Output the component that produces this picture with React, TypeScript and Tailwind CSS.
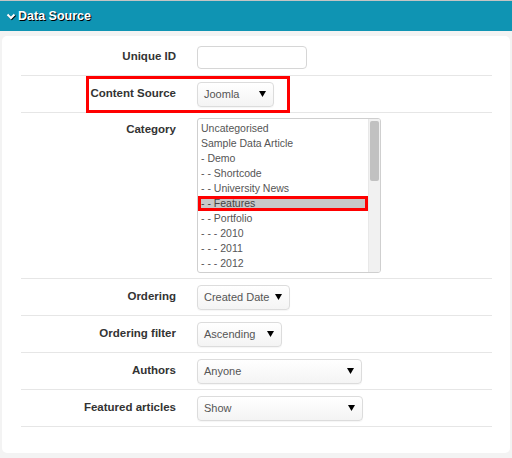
import React from "react";

const Tri = () => (
  <svg width="7" height="6" viewBox="0 0 7 6" className="shrink-0">
    <polygon points="0,0 7,0 3.5,6" fill="#000" />
  </svg>
);

const Select = ({ value, w }: { value: string; w: string }) => (
  <div
    className={`${w} h-[25px] flex items-center justify-between pl-[6px] pr-[7px] border border-[#dcdcdc] rounded-[4px] bg-linear-to-b from-white to-[#f4f4f4] shadow-[0_1px_1px_rgba(0,0,0,0.04)] text-[11px] text-[#555]`}
  >
    <span>{value}</span>
    <Tri />
  </div>
);

const Row = ({
  label,
  children,
  extra,
}: {
  label: string;
  children: React.ReactNode;
  extra?: React.ReactNode;
}) => (
  <div className="relative flex items-center h-[37px] border-b border-[#e6e6e6]">
    <div className="w-[155px] text-right text-[11.5px] font-bold text-[#333]">{label}</div>
    <div className="ml-[21px]">{children}</div>
    {extra}
  </div>
);

const options = [
  "Uncategorised",
  "Sample Data Article",
  "- Demo",
  "- - Shortcode",
  "- - University News",
  "- - Features",
  "- - Portfolio",
  "- - - 2010",
  "- - - 2011",
  "- - - 2012",
];

export default function App() {
  return (
    <div className="w-[512px] h-[458px] bg-[#f3f3f3] font-['Liberation_Sans',Arial,sans-serif] overflow-hidden">
      <div className="h-[31px] border-t border-[#c4c4c4] bg-[#0f94b3] flex items-center pl-[6px] text-white font-bold text-[12.5px] [text-shadow:1px_1px_0_#000]">
        <svg width="11" height="8" viewBox="0 0 11 8" className="mr-[1px] mt-[1px]">
          <polyline points="2.3,2.3 5.8,5.8 9.3,2.3" fill="none" stroke="#000" strokeWidth="2" />
          <polyline points="1.5,1.5 5,5 8.5,1.5" fill="none" stroke="#fff" strokeWidth="2" />
        </svg>
        <span>Data Source</span>
      </div>
      <div className="pt-[5px] px-[2px]">
        <div className="bg-white rounded-[5px] pt-[3px] pb-[26px] pl-[19px] pr-[18px]">
          <Row label="Unique ID">
            <div className="w-[110px] h-[23px] border border-[#d6d6d6] rounded-[4px] bg-white" />
          </Row>
          <Row
            label="Content Source"
            extra={
              <div className="absolute left-[65px] top-0 w-[204px] h-[37px] border-[3px] border-[#ff0000] pointer-events-none" />
            }
          >
            <Select value="Joomla" w="w-[77px]" />
          </Row>
          <div className="flex items-start py-[5px] border-b border-[#e6e6e6]">
            <div className="w-[155px] mt-[4px] leading-[15px] text-right text-[11.5px] font-bold text-[#333]">
              Category
            </div>
            <div className="ml-[21px] w-[184px] h-[155px] border border-[#cfcfcf] rounded-[3px] flex overflow-hidden bg-white">
              <div className="flex-1 pt-[2px]">
                {options.map((o) =>
                  o === "- - Features" ? (
                    <div
                      key={o}
                      className="leading-[15px] pl-[3px] text-[10.5px] text-[#444] bg-[#c8c8c8] shadow-[inset_0_0_0_3px_#ff0000]"
                    >
                      {o}
                    </div>
                  ) : (
                    <div key={o} className="leading-[15px] pl-[3px] text-[10.5px] text-[#555]">
                      {o}
                    </div>
                  )
                )}
              </div>
              <div className="w-[12px] bg-[#f1f1f1] border-l border-[#e8e8e8] pt-[2px] px-[1px]">
                <div className="h-[60px] bg-[#c1c1c1] rounded-[2px]" />
              </div>
            </div>
          </div>
          <Row label="Ordering">
            <Select value="Created Date" w="w-[93px]" />
          </Row>
          <Row label="Ordering filter">
            <Select value="Ascending" w="w-[85px]" />
          </Row>
          <Row label="Authors">
            <Select value="Anyone" w="w-[165px]" />
          </Row>
          <Row label="Featured articles">
            <Select value="Show" w="w-[166px]" />
          </Row>
        </div>
      </div>
    </div>
  );
}
